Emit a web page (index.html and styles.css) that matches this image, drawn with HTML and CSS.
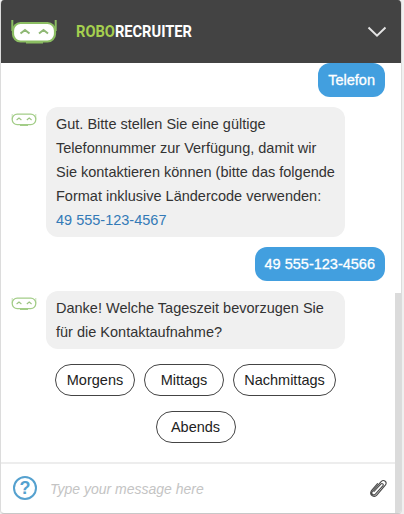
FILE: index.html
```
<!DOCTYPE html>
<html lang="de">
<head>
  <meta charset="UTF-8" />
  <meta name="viewport" content="width=device-width, initial-scale=1.0" />
  <title>RoboRecruiter</title>
  <link rel="stylesheet" href="styles.css">
</head>
<body>
  <!-- Robot face shared by the message avatars -->
  <svg class="sprite" aria-hidden="true">
    <symbol id="robot-small" viewBox="0 0 26 14">
      <path d="M1.2 1v5M24.8 1v5" stroke="#c5dfb5" stroke-width="1" />
      <rect x="1.2" y="1.2" width="23.6" height="10.4" rx="5" fill="#fff" stroke="#a3cd88" stroke-width="1.3" />
      <path d="M9 12.4h8" stroke="#a3cd88" stroke-width="1.2" />
      <path d="M5.6 7l2.4-2 2.4 2M15.8 7l2.4-2 2.4 2" fill="none" stroke="#9cc481" stroke-width="1.1" />
    </symbol>
  </svg>

  <div class="chat">
    <header class="header">
      <svg class="logo" viewBox="0 0 46 26">
        <path d="M1.3 1v11M44.7 1v11" stroke="#8bbd62" stroke-width="2" />
        <rect x="2" y="4" width="42" height="18.5" rx="7.5" fill="#fff" stroke="#8bbd62" stroke-width="2.2" />
        <path d="M15 23.6h17" stroke="#8bbd62" stroke-width="2" />
        <path d="M9.5 14.5l4.5-3.5 4.5 3.5M28 14.5l4.5-3.5 4.5 3.5" fill="none" stroke="#8fb874" stroke-width="2" />
      </svg>
      <h1 class="brand"><span>ROBO</span>RECRUITER</h1>
      <svg class="chevron" viewBox="0 0 20 12">
        <path d="M1.5 1.5L10 9.7l8.5-8.2" fill="none" stroke="#e4e4e4" stroke-width="2" />
      </svg>
    </header>

    <main class="messages">
      <div class="message user">
        <p class="bubble">Telefon</p>
      </div>

      <div class="message">
        <svg class="avatar"><use href="#robot-small" /></svg>
        <p class="bubble">Gut. Bitte stellen Sie eine gültige<br>Telefonnummer zur Verfügung, damit wir<br>Sie kontaktieren können (bitte das folgende<br>Format inklusive Ländercode verwenden:<br><a href="#">49 555-123-4567</a></p>
      </div>

      <div class="message user">
        <p class="bubble">49 555-123-4566</p>
      </div>

      <div class="message">
        <svg class="avatar"><use href="#robot-small" /></svg>
        <p class="bubble">Danke! Welche Tageszeit bevorzugen Sie<br>für die Kontaktaufnahme?</p>
      </div>

      <div class="replies">
        <button>Morgens</button>
        <button>Mittags</button>
        <button class="wide">Nachmittags</button>
        <button>Abends</button>
      </div>
    </main>

    <footer class="footer">
      <button class="help">?</button>
      <input type="text" placeholder="Type your message here" />
      <svg class="clip" viewBox="0 0 18 20">
        <path d="M5 13.5l6.8-7.4c1.4-1.4 3.2.2 2 1.7l-7.400 8.300c-2 2-4.700-.4-3-2.600l8.700-9.800c2.800-2.800 6.600.4 4.200 3.500L8 16.800c-2.600 3.400-8 .4-5.700-3.900l6.200-7.200" fill="none" stroke="#484848" stroke-width="1.1" stroke-linecap="round" />
      </svg>
    </footer>
    <div class="scrollbar"></div>
  </div>
</body>
</html>
```
FILE: styles.css
```
* {
  box-sizing: border-box;
}
body {
  margin: 0;
  height: 514px;
  background-color: #f0f0f0;
  font-family: "Liberation Sans", Arial, sans-serif;
  font-size: 14.5px;
  color: #333;
  overflow: hidden;
}
.sprite {
  display: none;
}
.chat {
  position: relative;
  display: flex;
  flex-direction: column;
  width: 402px;
  height: 514px;
  background-color: #fff;
  border-left: 1px solid #dcdcdc;
  border-right: 1px solid #dcdcdc;
  border-bottom: 1px solid #c8c8c8;
  border-radius: 4px;
  overflow: hidden;
}
.header {
  display: flex;
  align-items: center;
  flex: none;
  height: 63px;
  padding: 0 14px 0 10px;
  background-color: #434343;
}
.logo {
  width: 46px;
  height: 26px;
}
.brand {
  margin: 0 0 0 19px;
  font-family: Roboto, sans-serif;
  font-size: 16px;
  font-weight: 700;
  line-height: 20px;
  color: #fff;
  transform: scaleX(0.915);
  transform-origin: left;
}
.brand span {
  color: #a5cf4f;
}
.chevron {
  width: 20px;
  height: 12px;
  margin-left: auto;
}
.messages {
  display: flex;
  flex-direction: column;
  gap: 10px;
  flex: 1;
  padding-left: 10px;
}
.message {
  display: flex;
  align-items: flex-start;
}
.avatar {
  width: 26px;
  height: 14px;
  margin: 6px 9px 0 0;
}
.bubble {
  width: 299px;
  margin: 0;
  padding: 5px 10px;
  line-height: 24px;
  white-space: nowrap;
  background-color: #f0f0f0;
  border-radius: 12px;
}
.bubble a {
  color: #337ab7;
  text-decoration: none;
}
.user {
  justify-content: flex-end;
  padding-right: 16px;
}
.user .bubble {
  width: auto;
  color: #fff;
  background-color: #429fdf;
  -webkit-text-stroke: 0.3px #fff;
}
.replies {
  display: flex;
  flex-wrap: wrap;
  justify-content: center;
  gap: 15px 9px;
  margin-top: 5px;
  padding: 0 21px 0 0;
}
.replies button {
  width: 80px;
  height: 32px;
  padding: 0;
  font: inherit;
  color: #222;
  background-color: #fff;
  border: 1px solid #444;
  border-radius: 16px;
}
.replies .wide {
  width: 103px;
}
.footer {
  display: flex;
  align-items: center;
  flex: none;
  height: 51px;
  padding: 0 14px 1px 12px;
  border-top: 2px solid #ededed;
}
.help {
  width: 24px;
  height: 24px;
  padding: 0;
  font: bold 18px/20px "Liberation Sans", Arial, sans-serif;
  color: #55a1cf;
  background-color: #fff;
  border: 2px solid #55a1cf;
  border-radius: 50%;
}
.footer input {
  flex: 1;
  min-width: 0;
  margin-left: 13px;
  padding: 2px 0 0;
  border: none;
  outline: none;
  font: italic 14px "Liberation Sans", Arial, sans-serif;
}
.footer input::placeholder {
  color: #c4c4c4;
}
.clip {
  width: 18px;
  height: 20px;
}
.scrollbar {
  position: absolute;
  top: 293px;
  right: -1px;
  bottom: 0;
  width: 7px;
  background-color: #dbdbdb;
}
```
